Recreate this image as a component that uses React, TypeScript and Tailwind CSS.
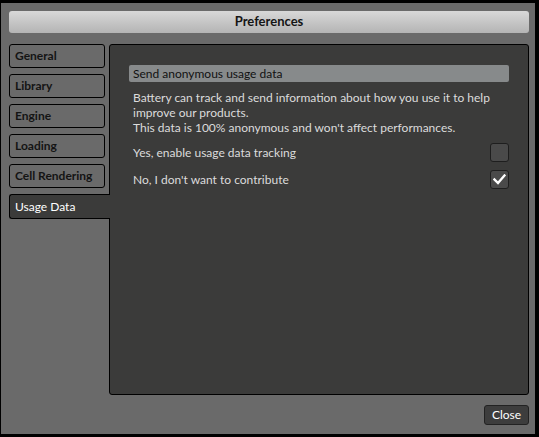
import { FC } from "react"

const tabs = ["General", "Library", "Engine", "Loading", "Cell Rendering"]

const CheckBox: FC<{ checked?: boolean }> = ({ checked }) => (
    <div className="w-[19px] h-[19px] rounded-[3px] border border-[#1e1e1e] bg-[#4a4a4a] flex items-center justify-center">
        {checked && (
            <svg width="13" height="11" viewBox="0 0 13 11">
                <path d="M1.5 5.5 L5 9 L11.5 1.5" stroke="#ffffff" strokeWidth="2.4" fill="none" strokeLinecap="square" />
            </svg>
        )}
    </div>
)

export default function App() {
    return (
        <div className="w-[539px] h-[437px] bg-[#6a6a6a] border-t-[3px] border-l border-r-[4px] border-b-[3px] border-black flex flex-col pl-2 pr-[6px] pt-2 text-[12px]" style={{ fontFamily: "Lato, 'Open Sans', sans-serif" }}>
            <div className="h-[22px] rounded-[3px] bg-gradient-to-b from-[#d8d8d8] to-[#b4b4b4] flex items-center justify-center font-bold text-[13px] text-[#151515]">
                Preferences
            </div>

            <div className="flex mt-[11px] h-[351px]">
                <div className="flex flex-col w-[100px] shrink-0">
                    {tabs.map((t, i) => (
                        <div key={i} className="w-[96px] h-[24px] mb-[6px] rounded-[3px] border border-black bg-[#6a6a6a] flex items-center pl-[5px] font-bold text-[#141414]">
                            {t}
                        </div>
                    ))}
                    <div className="relative z-10 w-[101px] -mr-px h-[25px] rounded-l-[3px] border border-r-0 border-black bg-[#3b3b3a] flex items-center pl-[5px] text-white">
                        Usage Data
                    </div>
                </div>

                <div className="flex-1 rounded-[3px] border border-black bg-[#3b3b3a] px-[19px] pt-[20px]">
                    <div className="h-[17px] rounded-[2px] bg-[#878a8b] flex items-center pl-1 text-[#111111]">
                        Send anonymous usage data
                    </div>
                    <p className="mt-[8px] pl-1 leading-[15px] text-[#dcdcdc] whitespace-nowrap">
                        Battery can track and send information about how you use it to help<br />
                        improve our products.<br />
                        This data is 100% anonymous and won't affect performances.
                    </p>
                    <div className="mt-[8px] flex items-center justify-between h-[19px] pl-1 text-[#dcdcdc]">
                        <span>Yes, enable usage data tracking</span>
                        <CheckBox />
                    </div>
                    <div className="mt-[8px] flex items-center justify-between h-[19px] pl-1 text-[#dcdcdc]">
                        <span>No, I don't want to contribute</span>
                        <CheckBox checked />
                    </div>
                </div>
            </div>

            <div className="flex justify-end mt-[10px]">
                <button className="w-[45px] h-[20px] rounded-[3px] border border-[#222] bg-[#3d3d3d] text-white text-[12px] flex items-center justify-center">
                    Close
                </button>
            </div>
        </div>
    )
}
